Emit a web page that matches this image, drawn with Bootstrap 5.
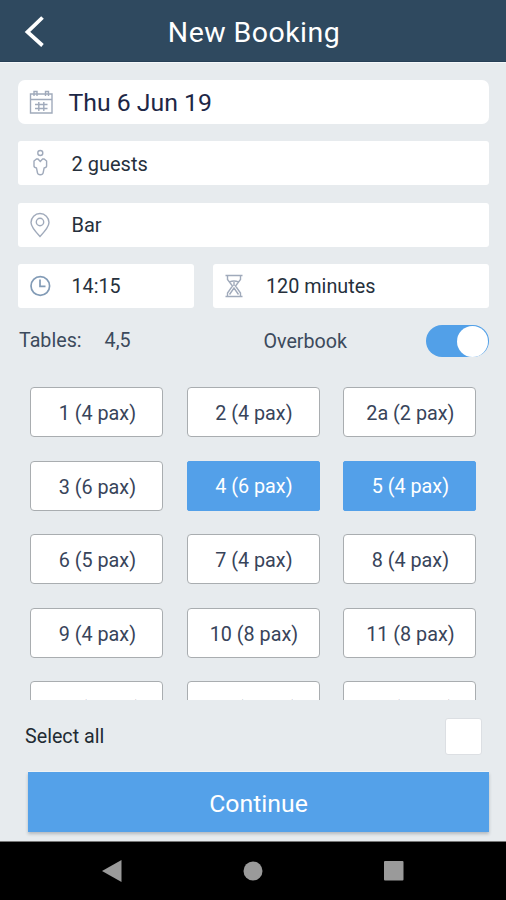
<!DOCTYPE html>
<html lang="en">
<head>
<meta charset="utf-8">
<meta name="viewport" content="width=device-width, initial-scale=1">
<title>New Booking</title>
<link href="https://cdn.jsdelivr.net/npm/bootstrap@5.3.0/dist/css/bootstrap.min.css" rel="stylesheet">
<style>
  body { font-family: Roboto, "Liberation Sans", sans-serif; background: #e7ebee; color: #26303c; font-size: 19.7px; line-height: 1.2; height: 900px; overflow: hidden; }
  .app-header { height: 62px; background: #2f495f; border-bottom: 1px solid #263f56; color: #fff; display: grid; grid-template-columns: 72px 1fr 72px; align-items: center; box-shadow: 0 1px 0 #f5f8fa; }
  .app-title { font-size: 28.5px; font-weight: 400; letter-spacing: .45px; padding: 5px 0 0 2px; }
  .form-area { padding: 18px 17px 0 18px; }
  .field-stack { display: grid; grid-template-rows: repeat(4, 44px); row-gap: 17.4px; }
  .field { background: #fff; border-radius: 3px; padding-left: 9px; font-size: 20px; }
  .field svg { width: 26px; height: 30px; flex: none; fill: none; stroke: #a0aabb; stroke-width: 1.4; }
  .field .clock-icon { stroke: #829bb6; stroke-width: 1.7; }
  .field-text { margin-left: 18.5px; padding-top: 1px; }
  .field-time { font-size: 19.7px; padding-top: 2px; }
  .field-duration { padding-left: 0; font-size: 19.8px; }
  .field-date { border-radius: 7px; color: #1d2746; font-size: 24.8px; }
  .field-date .field-text { margin-left: 15.5px; padding-top: 2px; }
  .field .field-duration { margin-left: 18.5px; }
  .time-row { display: grid; grid-template-columns: 175.5px 1fr; column-gap: 19px; }
  .status-row { height: 34px; margin-top: 16px; padding-left: 1px; color: #3c4a5c; }
  .picked-tables { margin-left: 23px; }
  .overbook-label { margin-right: 79px; padding-top: 1px; }
  .switch-track { width: 63px; height: 32px; border-radius: 16px; background: #52a0e8; padding-right: 1px; }
  .switch-knob { width: 31px; height: 31px; border-radius: 50%; background: #fff; }
  .tables-view { height: 313px; margin-top: 29px; padding: 0 12.4px; overflow: hidden; }
  .tables-grid { display: grid; grid-template-columns: repeat(3, 133px); grid-auto-rows: 50px; gap: 23.5px; }
  .table-btn { font-size: 19.8px; padding: 4px 0 0 1px; border: 1.5px solid #a9adb0; border-radius: 4px; background: #fff; color: #38445a; line-height: 1.2; }
  .table-btn:nth-child(n+13) { padding-top: 7px; }
  .table-btn.chosen { background: #53a0e9; border-color: #53a0e9; color: #fff; border-radius: 2px; padding-top: 3px; }
  .select-row { height: 72px; padding: 0 7px; color: #222b33; }
  .select-label { padding-top: 2px; }
  .check-box { width: 37px; height: 37px; background: #fff; border: 1px solid #dcdfe3; border-radius: 3px; }
  .continue-btn { width: 461px; height: 60px; margin-left: 10px; background: #54a1e9; color: #fff; font-size: 24.8px; border: 0; border-radius: 0; box-shadow: 0 2px 3px rgba(60,70,80,.3), 0 -1px 0 #f2f5f7; padding: 2px 0 0; }
  .system-bar { height: 58.5px; margin-top: 9px; background: #000; border-top: 1px solid #777; padding: 0 102px; }
  .system-bar svg { fill: #9a9a9a; display: block; }
</style>
</head>
<body>
<header class="app-header">
  <svg width="72" height="62" viewBox="0 0 72 62" fill="none" stroke="#fff" stroke-width="3.800"><path d="M42.500 17.500 27.500 32l15 13.500"/></svg>
  <div class="app-title text-center">New Booking</div>
</header>
<main class="form-area">
  <div class="field-stack">
    <div class="field field-date d-flex align-items-center">
      <svg viewBox="0 0 26 30"><path d="M3.500 7h21.500v19h-21.500zM3.500 12.500h21.500M7 9V4.500h3V9M18.500 9V4.500h3V9M11.800 15v9M16.800 15v9M8 17.500h12.500M8 21.500h12.500"/></svg>
      <span class="field-text">Thu 6 Jun 19</span>
    </div>
    <div class="field d-flex align-items-center">
      <svg viewBox="0 0 26 30"><circle cx="13.300" cy="5" r="2.500"/><path d="M13.300 13.500 11 11H9.500L7 13v5q0 1.500 2.500 2l1 5q.3 1.700 2.800 1.700t2.800-1.700l1-5q2.500-.5 2.500-2v-5l-2.500-2h-1.500z"/></svg>
      <span class="field-text">2 guests</span>
    </div>
    <div class="field d-flex align-items-center">
      <svg viewBox="0 0 26 30"><path d="M13 26.500Q4 17 4 12.500a9 9 0 0 1 18 0q0 4.500-9 14z"/><circle cx="13" cy="12" r="3.700"/></svg>
      <span class="field-text">Bar</span>
    </div>
    <div class="time-row">
      <div class="field d-flex align-items-center">
        <svg class="clock-icon" viewBox="0 0 26 30"><circle cx="13.300" cy="15" r="9.300"/><path d="M13 8.500v6.800h5.500"/></svg>
        <span class="field-text field-time">14:15</span>
      </div>
      <div class="field d-flex align-items-center">
        <svg viewBox="0 0 26 30"><path d="M3.500 4.500h17M3.500 25.500h17M5.500 5v3.500L10.500 15 5.500 22v3M18.500 5v3.500L13.500 15l5 7v3M7.500 11q4.500-2 9 0M12 11v4M7.500 23.500 12 17l4.500 6.500"/></svg>
        <span class="field-text field-duration">120 minutes</span>
      </div>
    </div>
  </div>
  <div class="status-row d-flex align-items-center">
    <span>Tables:</span><span class="picked-tables">4,5</span>
    <span class="ms-auto overbook-label">Overbook</span>
    <div class="switch-track d-flex align-items-center justify-content-end"><span class="switch-knob"></span></div>
  </div>
  <div class="tables-view">
    <div class="tables-grid">
      <button class="btn table-btn">1 (4 pax)</button><button class="btn table-btn">2 (4 pax)</button><button class="btn table-btn">2a (2 pax)</button>
      <button class="btn table-btn">3 (6 pax)</button><button class="btn table-btn chosen">4 (6 pax)</button><button class="btn table-btn chosen">5 (4 pax)</button>
      <button class="btn table-btn">6 (5 pax)</button><button class="btn table-btn">7 (4 pax)</button><button class="btn table-btn">8 (4 pax)</button>
      <button class="btn table-btn">9 (4 pax)</button><button class="btn table-btn">10 (8 pax)</button><button class="btn table-btn">11 (8 pax)</button>
      <button class="btn table-btn">12 (4 pax)</button><button class="btn table-btn">13 (4 pax)</button><button class="btn table-btn">14 (4 pax)</button>
    </div>
  </div>
  <div class="select-row d-flex align-items-center justify-content-between">
    <span class="select-label">Select all</span><span class="check-box"></span>
  </div>
  <button class="btn continue-btn">Continue</button>
</main>
<nav class="system-bar d-flex align-items-center justify-content-between">
  <svg width="20" height="22"><path d="M0 11 19.500 0v22z"/></svg>
  <svg width="20" height="20"><circle cx="10" cy="10" r="9.500"/></svg>
  <svg width="20" height="20"><rect width="19.500" height="19.500" rx="1"/></svg>
</nav>
<script src="https://cdn.jsdelivr.net/npm/bootstrap@5.3.0/dist/js/bootstrap.bundle.min.js"></script>
</body>
</html>
